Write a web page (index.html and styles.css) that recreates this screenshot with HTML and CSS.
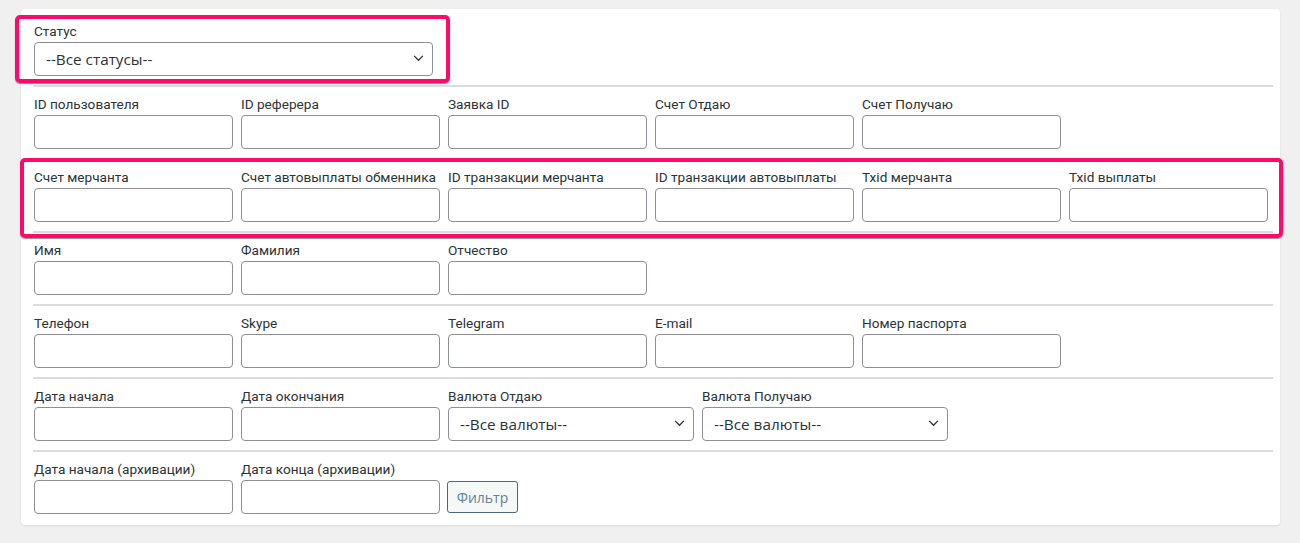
FILE: index.html
```html
<!DOCTYPE html>
<html lang="ru">
<head>
<meta charset="utf-8">
<title>Фильтр</title>
<link rel="stylesheet" href="styles.css">
</head>
<body>
<div class="card">
  <div class="row">
    <div class="field wide">
      <label class="lbl">Статус</label>
      <div class="sel-wrap">
        <select class="sel"><option>--Все статусы--</option></select>
        <svg class="chev" width="12" height="8" viewBox="0 0 12 8"><polyline points="1,1 6,6 11,1" fill="none" stroke="#2c3338" stroke-width="1.5"/></svg>
      </div>
    </div>
  </div>
  <div class="row">
    <div class="field"><label class="lbl">ID пользователя</label><input class="inp" type="text"></div>
    <div class="field"><label class="lbl">ID реферера</label><input class="inp" type="text"></div>
    <div class="field"><label class="lbl">Заявка ID</label><input class="inp" type="text"></div>
    <div class="field"><label class="lbl">Счет Отдаю</label><input class="inp" type="text"></div>
    <div class="field"><label class="lbl">Счет Получаю</label><input class="inp" type="text"></div>
  </div>
  <div class="row">
    <div class="field"><label class="lbl">Счет мерчанта</label><input class="inp" type="text"></div>
    <div class="field"><label class="lbl">Счет автовыплаты обменника</label><input class="inp" type="text"></div>
    <div class="field"><label class="lbl">ID транзакции мерчанта</label><input class="inp" type="text"></div>
    <div class="field"><label class="lbl">ID транзакции автовыплаты</label><input class="inp" type="text"></div>
    <div class="field"><label class="lbl">Txid мерчанта</label><input class="inp" type="text"></div>
    <div class="field"><label class="lbl">Txid выплаты</label><input class="inp" type="text"></div>
  </div>
  <div class="row">
    <div class="field"><label class="lbl">Имя</label><input class="inp" type="text"></div>
    <div class="field"><label class="lbl">Фамилия</label><input class="inp" type="text"></div>
    <div class="field"><label class="lbl">Отчество</label><input class="inp" type="text"></div>
  </div>
  <div class="row">
    <div class="field"><label class="lbl">Телефон</label><input class="inp" type="text"></div>
    <div class="field"><label class="lbl">Skype</label><input class="inp" type="text"></div>
    <div class="field"><label class="lbl">Telegram</label><input class="inp" type="text"></div>
    <div class="field"><label class="lbl">E-mail</label><input class="inp" type="text"></div>
    <div class="field"><label class="lbl">Номер паспорта</label><input class="inp" type="text"></div>
  </div>
  <div class="row">
    <div class="field"><label class="lbl">Дата начала</label><input class="inp" type="text"></div>
    <div class="field"><label class="lbl">Дата окончания</label><input class="inp" type="text"></div>
    <div class="field cur">
      <label class="lbl">Валюта Отдаю</label>
      <div class="sel-wrap">
        <select class="sel"><option>--Все валюты--</option></select>
        <svg class="chev" width="12" height="8" viewBox="0 0 12 8"><polyline points="1,1 6,6 11,1" fill="none" stroke="#2c3338" stroke-width="1.5"/></svg>
      </div>
    </div>
    <div class="field cur">
      <label class="lbl">Валюта Получаю</label>
      <div class="sel-wrap">
        <select class="sel"><option>--Все валюты--</option></select>
        <svg class="chev" width="12" height="8" viewBox="0 0 12 8"><polyline points="1,1 6,6 11,1" fill="none" stroke="#2c3338" stroke-width="1.5"/></svg>
      </div>
    </div>
  </div>
  <div class="row last">
    <div class="field"><label class="lbl">Дата начала (архивации)</label><input class="inp" type="text"></div>
    <div class="field"><label class="lbl">Дата конца (архивации)</label><input class="inp" type="text"></div>
    <button class="btn" type="button">Фильтр</button>
  </div>

  <div class="mark mark-status"></div>
  <div class="mark mark-merchant"></div>
</div>
</body>
</html>
```
FILE: styles.css
```css
html, body {
  margin: 0;
  padding: 0;
  background: #f0f0f1;
}
body {
  padding: 9px 20px 18px 21px;
  font-family: Roboto, "Liberation Sans", sans-serif;
}
.card {
  position: relative;
  background: #fff;
  border-radius: 4px;
  box-shadow: 0 1px 2px rgba(0, 0, 0, 0.09);
  padding: 12px 7px 11px 12px;
  width: 1240px;
}
.row {
  display: flex;
  gap: 8px;
  padding: 7px 0 9px 1px;
  border-bottom: 2px solid #dcdcde;
}
.row:first-child {
  padding-top: 0;
}
.row.last {
  border-bottom: none;
  padding-bottom: 0;
}
.field {
  display: flex;
  flex-direction: column;
  width: 199px;
}
.field.wide {
  width: 399px;
}
.field.cur {
  width: 246px;
}
.lbl {
  display: block;
  font-size: 13.6px;
  line-height: 20px;
  height: 20px;
  margin-bottom: 1px;
  color: #2c3338;
  white-space: nowrap;
}
.inp {
  box-sizing: border-box;
  width: 100%;
  height: 34px;
  margin: 0;
  border: 1px solid #8c8f94;
  border-radius: 4px;
  background: #fff;
  padding: 0 8px;
  font-family: "Open Sans", sans-serif;
  font-size: 14px;
}
.sel-wrap {
  position: relative;
  width: 100%;
}
.sel {
  box-sizing: border-box;
  -webkit-appearance: none;
  appearance: none;
  width: 100%;
  height: 34px;
  margin: 0;
  border: 1px solid #8c8f94;
  border-radius: 4px;
  background: #fff;
  padding: 0 24px 0 11px;
  font-family: "Open Sans", sans-serif;
  font-size: 15.3px;
  color: #2c3338;
}
.chev {
  position: absolute;
  right: 9px;
  top: 13px;
  width: 11px;
  height: 7px;
  pointer-events: none;
}
.btn {
  align-self: flex-end;
  box-sizing: border-box;
  height: 32px;
  width: 71px;
  margin: 0 0 1px -1px;
  padding: 0;
  border: 1px solid #4a6a78;
  border-radius: 3px;
  background: #f6f7f7;
  color: #5f8397;
  font-family: "Open Sans", sans-serif;
  font-size: 14px;
}
.mark {
  position: absolute;
  box-sizing: border-box;
  border: 4px solid #ff0a6c;
  border-radius: 5px;
  box-shadow: 0 1px 1px rgba(0, 0, 0, 0.45);
  pointer-events: none;
}
.mark-status {
  left: -6px;
  top: 6px;
  width: 435px;
  height: 68px;
}
.mark-merchant {
  left: -1px;
  top: 149px;
  width: 1263px;
  height: 80px;
}
```
